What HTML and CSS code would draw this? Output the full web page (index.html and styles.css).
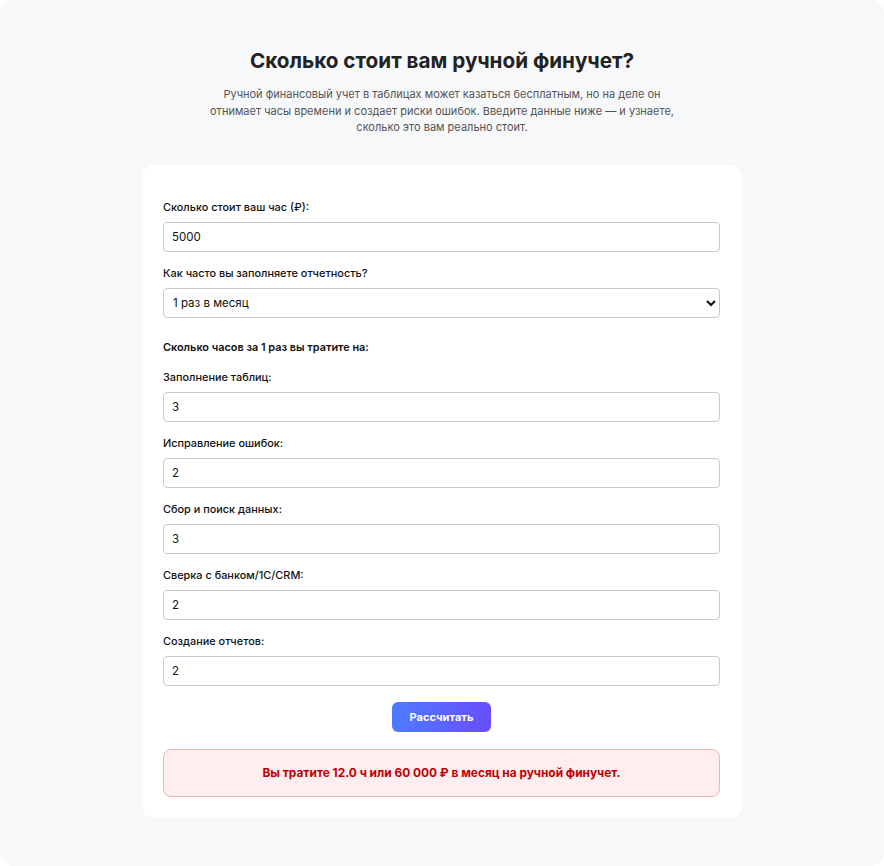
FILE: index.html
```html
<!DOCTYPE html>
<html lang="ru">
<head>
<meta charset="utf-8">
<title>Калькулятор финучета</title>
<link rel="stylesheet" href="styles.css">
</head>
<body>
<div class="page">
  <h1 class="title">Сколько стоит вам ручной финучет?</h1>
  <p class="lead">Ручной финансовый учет в таблицах может казаться бесплатным, но на деле он отнимает часы времени и создает риски ошибок. Введите данные ниже — и узнаете, сколько это вам реально стоит.</p>
  <div class="card">
    <div class="group">
      <label class="label">Сколько стоит ваш час (₽):</label>
      <input class="field" type="text" value="5000">
    </div>
    <div class="group">
      <label class="label">Как часто вы заполняете отчетность?</label>
      <select class="field select">
        <option>1 раз в месяц</option>
      </select>
    </div>
    <div class="subhead">Сколько часов за 1 раз вы тратите на:</div>
    <div class="group">
      <label class="label">Заполнение таблиц:</label>
      <input class="field" type="text" value="3">
    </div>
    <div class="group">
      <label class="label">Исправление ошибок:</label>
      <input class="field" type="text" value="2">
    </div>
    <div class="group">
      <label class="label">Сбор и поиск данных:</label>
      <input class="field" type="text" value="3">
    </div>
    <div class="group">
      <label class="label">Сверка с банком/1С/CRM:</label>
      <input class="field" type="text" value="2">
    </div>
    <div class="group last">
      <label class="label">Создание отчетов:</label>
      <input class="field" type="text" value="2">
    </div>
    <div class="actions">
      <button class="btn" type="button">Рассчитать</button>
    </div>
    <div class="result">Вы тратите 12.0 ч или 60 000 ₽ в месяц на ручной финучет.</div>
  </div>
</div>
</body>
</html>
```
FILE: styles.css
```css
* { box-sizing: border-box; }
html, body { margin: 0; padding: 0; background: #ffffff; }
body { font-family: Inter, "Noto Sans", sans-serif; color: #111; }
.page {
  width: 884px;
  height: 866px;
  background: #f7f8fa;
  border-radius: 14px;
  padding: 47px 0 0;
  display: flex;
  flex-direction: column;
  align-items: center;
}
.title {
  margin: 0;
  font-size: 20.7px;
  line-height: 28px;
  font-weight: 700;
  color: #222;
  text-align: center;
}
.lead {
  margin: 11px 0 0;
  width: 470px;
  font-size: 11px;
  line-height: 16.6px;
  color: #555;
  text-align: center;
}
.card {
  margin-top: 29px;
  width: 600px;
  background: #fff;
  border-radius: 12px;
  padding: 35px 22px 21px 21px;
}
.group { margin-bottom: 14px; }
.group.last { margin-bottom: 16px; }
.label {
  display: block;
  font-size: 10.9px;
  line-height: 15px;
  font-weight: 500;
  color: #111;
  margin-bottom: 7px;
}
.field {
  display: block;
  width: 100%;
  height: 30px;
  border: 1px solid #c8c8c8;
  border-radius: 4px;
  padding: 0 8px;
  font-family: Inter, "Noto Sans", sans-serif;
  font-size: 11.5px;
  color: #111;
  background: #fff;
  outline: none;
}
.select { padding: 0 5px; }
.subhead {
  font-size: 10.9px;
  line-height: 15px;
  font-weight: 600;
  color: #111;
  margin: 22px 0 15px;
}
.actions { display: flex; justify-content: center; }
.btn {
  width: 99px;
  height: 30px;
  border: none;
  border-radius: 6px;
  background: linear-gradient(90deg, #4d7bff, #6a4dff);
  color: #fff;
  font-family: Inter, "Noto Sans", sans-serif;
  font-size: 11px;
  font-weight: 700;
  cursor: pointer;
}
.result {
  margin-top: 17px;
  height: 48px;
  display: flex;
  align-items: center;
  justify-content: center;
  background: #ffeef0;
  border: 1px solid #f6b3b5;
  border-radius: 8px;
  color: #c00000;
  font-size: 11.9px;
  font-weight: 700;
}
```
